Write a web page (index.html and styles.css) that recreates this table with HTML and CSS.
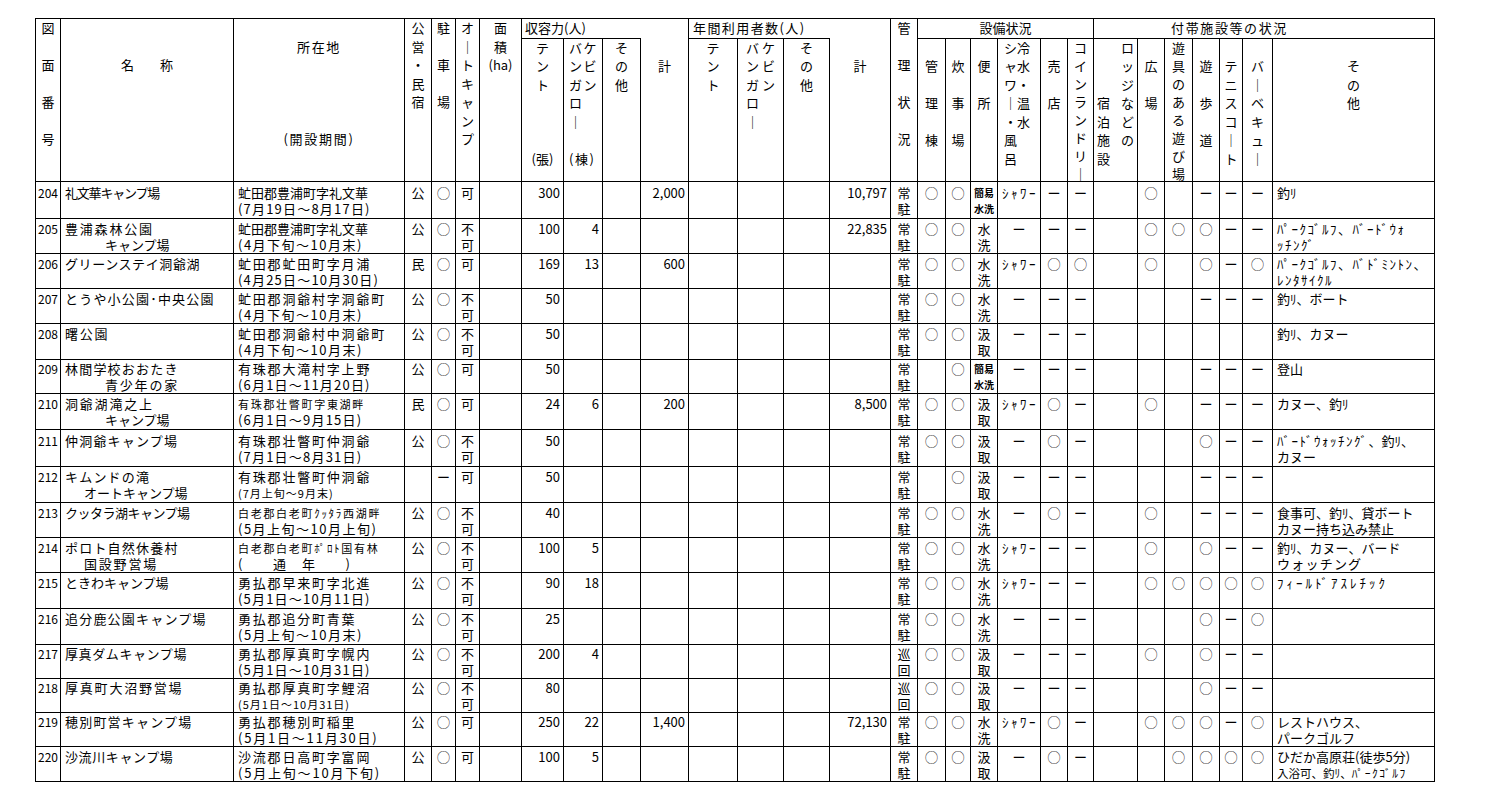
FILE: index.html
```html
<!DOCTYPE html>
<html lang="ja">
<head>
<meta charset="utf-8">
<title>キャンプ場一覧</title>
<link rel="stylesheet" href="styles.css">
</head>
<body>
<div class="page">
<table class="sheet">
<colgroup>
<col class="k1"><col class="k2"><col class="k3"><col class="k4"><col class="k5"><col class="k6"><col class="k7"><col class="k8"><col class="k9"><col class="k10"><col class="k11"><col class="k12"><col class="k13"><col class="k14"><col class="k15"><col class="k16"><col class="k17"><col class="k18"><col class="k19"><col class="k20"><col class="k21"><col class="k22"><col class="k23"><col class="k24"><col class="k25"><col class="k26"><col class="k27"><col class="k28"><col class="k29">
</colgroup>
<thead>
<tr class="hd1">
<th rowspan="2">図<br><br>面<br><br>番<br><br>号</th>
<th rowspan="2"><br><br>名　　称</th>
<th rowspan="2" class="hs"><br>所在地<br><br><br><br><br>(開設期間)</th>
<th rowspan="2">公<br>営<br>・<br>民<br>宿</th>
<th rowspan="2">駐<br><br>車<br><br>場</th>
<th rowspan="2">オ<br>｜<br>ト<br>キ<br>ャ<br>ン<br>プ</th>
<th rowspan="2">面<br>積<br>(ha)</th>
<th colspan="4" class="grp">収容力(人)</th>
<th colspan="4" class="grp g2">年間利用者数(人)</th>
<th rowspan="2">管<br><br>理<br><br>状<br><br>況</th>
<th colspan="6">設備状況</th>
<th colspan="7" class="g3">付帯施設等の状況</th>
</tr>
<tr class="hd2">
<th>テ<br>ン<br>ト<br><br><br><br>(張)</th>
<th class="two">バケ<br>ンビ<br>ガン<br>ロ<br>｜<br><br>(棟)</th>
<th>そ<br>の<br>他</th>
<th class="nt"><br>計</th>
<th>テ<br>ン<br>ト</th>
<th class="two2">バケ<br>ンビ<br>ガン<br>ロ<br>｜</th>
<th>そ<br>の<br>他</th>
<th class="nt"><br>計</th>
<th><br>管<br><br>理<br><br>棟</th>
<th><br>炊<br><br>事<br><br>場</th>
<th><br>便<br><br>所</th>
<th class="two3">シ冷<br>ャ水<br>ワ・<br>｜温<br>・水<br>風<br>呂</th>
<th><br>売<br><br>店</th>
<th><div class="fit">コ<br>イ<br>ン<br>ラ<br>ン<br>ド<br>リ<br>｜</div></th>
<th class="two4">　ロ<br>　ッ<br>　ジ<br>宿な<br>泊ど<br>施の<br>設</th>
<th><br>広<br><br>場</th>
<th><div class="fit">遊<br>具<br>の<br>あ<br>る<br>遊<br>び<br>場</div></th>
<th><br>遊<br><br>歩<br><br>道</th>
<th><br>テ<br>ニ<br>ス<br>コ<br>｜<br>ト</th>
<th><br>バ<br>｜<br>ベ<br>キ<br>ュ<br>｜</th>
<th><br>そ<br>の<br>他</th>
</tr>
</thead>
<tbody>
<tr class="h37"><td>204</td><td><span class="tm1">礼文華キャンプ場</span></td><td>虻田郡豊浦町字礼文華<br><span class="t1">(7月19日～8月17日)</span></td><td>公</td><td>◯</td><td>可</td><td></td><td>300</td><td></td><td></td><td>2,000</td><td></td><td></td><td></td><td>10,797</td><td>常<br>駐</td><td>◯</td><td>◯</td><td class="sm">簡易<br>水洗</td><td class="sw">ｼｬﾜｰ</td><td>ー</td><td>ー</td><td></td><td>◯</td><td></td><td>ー</td><td>ー</td><td>ー</td><td>釣ﾘ</td></tr>
<tr class="h35"><td>205</td><td><span class="t2">豊浦森林公園</span><br><span class="i1">キャンプ場</span></td><td>虻田郡豊浦町字礼文華<br><span class="t15">(4月下旬～10月末)</span></td><td>公</td><td>◯</td><td>不<br>可</td><td></td><td>100</td><td>4</td><td></td><td></td><td></td><td></td><td></td><td>22,835</td><td>常<br>駐</td><td>◯</td><td>◯</td><td>水<br>洗</td><td>ー</td><td>ー</td><td>ー</td><td></td><td>◯</td><td>◯</td><td>◯</td><td>ー</td><td>ー</td><td><span class="hw">ﾊﾟｰｸｺﾞﾙﾌ、ﾊﾞｰﾄﾞｳｫ</span><br><span class="hw">ｯﾁﾝｸﾞ</span></td></tr>
<tr class="h35"><td>206</td><td><span class="t05">グリーンステイ洞爺湖</span></td><td><span class="t2">虻田郡虻田町字月浦</span><br><span class="t1">(4月25日～10月30日)</span></td><td>民</td><td>◯</td><td>可</td><td></td><td>169</td><td>13</td><td></td><td>600</td><td></td><td></td><td></td><td></td><td>常<br>駐</td><td>◯</td><td>◯</td><td>水<br>洗</td><td class="sw">ｼｬﾜｰ</td><td>◯</td><td>◯</td><td></td><td>◯</td><td></td><td>◯</td><td>ー</td><td>◯</td><td><span class="hw">ﾊﾟｰｸｺﾞﾙﾌ、ﾊﾞﾄﾞﾐﾝﾄﾝ、</span><br><span class="hw">ﾚﾝﾀｻｲｸﾙ</span></td></tr>
<tr class="h35"><td>207</td><td><span class="t1">とうや小公園･中央公園</span></td><td><span class="t2">虻田郡洞爺村字洞爺町</span><br><span class="t15">(4月下旬～10月末)</span></td><td>公</td><td>◯</td><td>不<br>可</td><td></td><td>50</td><td></td><td></td><td></td><td></td><td></td><td></td><td></td><td>常<br>駐</td><td>◯</td><td>◯</td><td>水<br>洗</td><td>ー</td><td>ー</td><td>ー</td><td></td><td></td><td></td><td>ー</td><td>ー</td><td>ー</td><td>釣ﾘ、ボート</td></tr>
<tr class="h36"><td>208</td><td><span class="t2">曙公園</span></td><td><span class="t2">虻田郡洞爺村中洞爺町</span><br><span class="t15">(4月下旬～10月末)</span></td><td>公</td><td>◯</td><td>不<br>可</td><td></td><td>50</td><td></td><td></td><td></td><td></td><td></td><td></td><td></td><td>常<br>駐</td><td>◯</td><td>◯</td><td>汲<br>取</td><td>ー</td><td>ー</td><td>ー</td><td></td><td></td><td></td><td></td><td></td><td></td><td>釣ﾘ、カヌー</td></tr>
<tr class="h34"><td>209</td><td><span class="t1">林間学校おおたき</span><br><span class="i1 t2">青少年の家</span></td><td><span class="t2">有珠郡大滝村字上野</span><br><span class="t1">(6月1日～11月20日)</span></td><td>公</td><td>◯</td><td>可</td><td></td><td>50</td><td></td><td></td><td></td><td></td><td></td><td></td><td></td><td>常<br>駐</td><td></td><td>◯</td><td class="sm">簡易<br>水洗</td><td>ー</td><td>ー</td><td>ー</td><td></td><td></td><td></td><td>ー</td><td>ー</td><td>ー</td><td>登山</td></tr>
<tr class="h36"><td>210</td><td><span class="t2">洞爺湖滝之上</span><br><span class="i1">キャンプ場</span></td><td><span class="as">有珠郡壮瞥町字東湖畔</span><br><span class="t1">(6月1日～9月15日)</span></td><td>民</td><td>◯</td><td>可</td><td></td><td>24</td><td>6</td><td></td><td>200</td><td></td><td></td><td></td><td>8,500</td><td>常<br>駐</td><td>◯</td><td>◯</td><td>汲<br>取</td><td class="sw">ｼｬﾜｰ</td><td>◯</td><td>ー</td><td></td><td>◯</td><td></td><td>ー</td><td>ー</td><td>ー</td><td>カヌー、釣ﾘ</td></tr>
<tr class="h37"><td>211</td><td><span class="t1">仲洞爺キャンプ場</span></td><td><span class="t2">有珠郡壮瞥町仲洞爺</span><br><span class="t1">(7月1日～8月31日)</span></td><td>公</td><td>◯</td><td>不<br>可</td><td></td><td>50</td><td></td><td></td><td></td><td></td><td></td><td></td><td></td><td>常<br>駐</td><td>◯</td><td>◯</td><td>汲<br>取</td><td>ー</td><td>◯</td><td>ー</td><td></td><td></td><td></td><td>◯</td><td>ー</td><td>ー</td><td><span class="hw">ﾊﾞｰﾄﾞｳｫｯﾁﾝｸﾞ</span>、釣ﾘ、<br>カヌー</td></tr>
<tr class="h36"><td>212</td><td><span class="t1">キムンドの滝</span><br><span class="i2">オートキャンプ場</span></td><td><span class="t2">有珠郡壮瞥町仲洞爺</span><br><span class="as1">(7月上旬～9月末)</span></td><td></td><td>ー</td><td>可</td><td></td><td>50</td><td></td><td></td><td></td><td></td><td></td><td></td><td></td><td>常<br>駐</td><td></td><td>◯</td><td>汲<br>取</td><td>ー</td><td>ー</td><td>ー</td><td></td><td></td><td></td><td>ー</td><td>ー</td><td>ー</td><td></td></tr>
<tr class="h35"><td>213</td><td><span class="tm05">クッタラ湖キャンプ場</span></td><td><span class="as">白老郡白老町ｸｯﾀﾗ西湖畔</span><br><span class="t15">(5月上旬～10月上旬)</span></td><td>公</td><td>◯</td><td>不<br>可</td><td></td><td>40</td><td></td><td></td><td></td><td></td><td></td><td></td><td></td><td>常<br>駐</td><td>◯</td><td>◯</td><td>水<br>洗</td><td>ー</td><td>◯</td><td>ー</td><td></td><td>◯</td><td></td><td>ー</td><td>ー</td><td>ー</td><td>食事可、釣ﾘ、貸ボート<br>カヌー持ち込み禁止</td></tr>
<tr class="h35"><td>214</td><td><span class="t1">ポロト自然休養村</span><br><span class="i2 t2">国設野営場</span></td><td><span class="as">白老郡白老町ﾎﾟﾛﾄ国有林</span><br><span class="t15">(　　通　年　　)</span></td><td>公</td><td>◯</td><td>不<br>可</td><td></td><td>100</td><td>5</td><td></td><td></td><td></td><td></td><td></td><td></td><td>常<br>駐</td><td>◯</td><td>◯</td><td>水<br>洗</td><td class="sw">ｼｬﾜｰ</td><td>ー</td><td>ー</td><td></td><td>◯</td><td></td><td>◯</td><td>ー</td><td>ー</td><td>釣ﾘ、カヌー、バード<br><span class="t1">ウォッチング</span></td></tr>
<tr class="h36"><td>215</td><td>ときわキャンプ場</td><td><span class="t2">勇払郡早来町字北進</span><br><span class="t1">(5月1日～10月11日)</span></td><td>公</td><td>◯</td><td>不<br>可</td><td></td><td>90</td><td>18</td><td></td><td></td><td></td><td></td><td></td><td></td><td>常<br>駐</td><td>◯</td><td>◯</td><td>水<br>洗</td><td class="sw">ｼｬﾜｰ</td><td>ー</td><td>ー</td><td></td><td>◯</td><td>◯</td><td>◯</td><td>◯</td><td>◯</td><td><span class="hw3">ﾌｨｰﾙﾄﾞｱｽﾚﾁｯｸ</span></td></tr>
<tr class="h36"><td>216</td><td><span class="t1">追分鹿公園キャンプ場</span></td><td><span class="t2">勇払郡追分町青葉</span><br><span class="t15">(5月上旬～10月末)</span></td><td>公</td><td>◯</td><td>不<br>可</td><td></td><td>25</td><td></td><td></td><td></td><td></td><td></td><td></td><td></td><td>常<br>駐</td><td>◯</td><td>◯</td><td>水<br>洗</td><td>ー</td><td>ー</td><td>ー</td><td></td><td></td><td></td><td>◯</td><td>ー</td><td>◯</td><td></td></tr>
<tr class="h34"><td>217</td><td><span class="t05">厚真ダムキャンプ場</span></td><td><span class="t2">勇払郡厚真町字幌内</span><br><span class="t1">(5月1日～10月31日)</span></td><td>公</td><td>◯</td><td>不<br>可</td><td></td><td>200</td><td>4</td><td></td><td></td><td></td><td></td><td></td><td></td><td>巡<br>回</td><td>◯</td><td>◯</td><td>汲<br>取</td><td>ー</td><td>ー</td><td>ー</td><td></td><td>◯</td><td></td><td>◯</td><td>ー</td><td>ー</td><td></td></tr>
<tr class="h34"><td>218</td><td><span class="t2">厚真町大沼野営場</span></td><td><span class="t2">勇払郡厚真町字鯉沼</span><br><span class="as1">(5月1日～10月31日)</span></td><td>公</td><td>◯</td><td>不<br>可</td><td></td><td>80</td><td></td><td></td><td></td><td></td><td></td><td></td><td></td><td>巡<br>回</td><td>◯</td><td>◯</td><td>汲<br>取</td><td>ー</td><td>ー</td><td>ー</td><td></td><td></td><td></td><td>◯</td><td>ー</td><td>ー</td><td></td></tr>
<tr class="h34"><td>219</td><td><span class="t1">穂別町営キャンプ場</span></td><td><span class="t2">勇払郡穂別町稲里</span><br><span class="t2">(5月1日～11月30日)</span></td><td>公</td><td>◯</td><td>可</td><td></td><td>250</td><td>22</td><td></td><td>1,400</td><td></td><td></td><td></td><td>72,130</td><td>常<br>駐</td><td>◯</td><td>◯</td><td>水<br>洗</td><td class="sw">ｼｬﾜｰ</td><td>◯</td><td>ー</td><td></td><td>◯</td><td>◯</td><td>◯</td><td>ー</td><td>◯</td><td>レストハウス、<br>パークゴルフ</td></tr>
<tr class="h35"><td>220</td><td><span class="t05">沙流川キャンプ場</span></td><td><span class="t2">沙流郡日高町字富岡</span><br><span class="t2">(5月上旬～10月下旬)</span></td><td>公</td><td>◯</td><td>可</td><td></td><td>100</td><td>5</td><td></td><td></td><td></td><td></td><td></td><td></td><td>常<br>駐</td><td>◯</td><td>◯</td><td>汲<br>取</td><td>ー</td><td>◯</td><td>ー</td><td></td><td></td><td>◯</td><td>◯</td><td>◯</td><td>◯</td><td>ひだか高原荘(徒歩5分)<br><span class="xs">入浴可、釣ﾘ、<span class="hw">ﾊﾟｰｸｺﾞﾙﾌ</span></span></td></tr>
</tbody>
</table>
</div>
</body>
</html>
```

FILE: styles.css
```css
* { box-sizing: border-box; }
html, body { margin: 0; padding: 0; background: #fff; }
body {
  font-family: "Noto Sans CJK JP", "Noto Sans", sans-serif;
  font-size: 13px;
  color: #000;
}
.page { padding: 18px 0 0 35px; }

.sheet {
  border-collapse: collapse;
  table-layout: fixed;
  width: 1400px;
}
.sheet th, .sheet td {
  border: 1px solid #000;
  padding: 0;
  font-weight: normal;
  vertical-align: top;
  white-space: nowrap;
}

/* column widths */
.k1 { width: 25px; } .k2 { width: 173px; } .k3 { width: 171px; }
.k4 { width: 27px; } .k5 { width: 24px; } .k6 { width: 24px; }
.k7 { width: 42px; } .k8 { width: 42px; } .k9 { width: 39px; }
.k10 { width: 38px; } .k11 { width: 48px; } .k12 { width: 49px; }
.k13 { width: 46px; } .k14 { width: 46px; } .k15 { width: 61px; }
.k16 { width: 27px; } .k17 { width: 28px; } .k18 { width: 25px; }
.k19 { width: 27px; } .k20 { width: 43px; } .k21 { width: 27px; }
.k22 { width: 26px; } .k23 { width: 44px; } .k24 { width: 27px; }
.k25 { width: 28px; } .k26 { width: 27px; } .k27 { width: 23px; }
.k28 { width: 30px; } .k29 { width: 162px; }

/* header */
.hd1 { height: 19px; }
.hd2 { height: 143px; }
.sheet th { line-height: 18.5px; text-align: center; }
.sheet th.hs { letter-spacing: 1.7px; }
.sheet th.grp { text-align: left; padding-left: 3px; border-bottom: none; }
.sheet th.g2 { padding-left: 4px; letter-spacing: 1.4px; }
.sheet th.g3 { text-align: left; padding-left: 77px; letter-spacing: 1.6px; }
.sheet th.nt { border-top: none; }
.sheet th.two { text-align: left; padding-left: 5px; letter-spacing: 1.5px; }
.sheet th.two2 { text-align: left; padding-left: 8px; letter-spacing: 3px; }
.sheet th.two3 { text-align: left; padding-left: 6px; }
.sheet th.two4 { text-align: left; padding-left: 3px; letter-spacing: 11px; }
.fit { height: 140px; line-height: 18px; }

/* body */
.sheet tbody td {
  line-height: 16px;
  padding: 2px 0 0;
  text-align: center;
  overflow: hidden;
}
.sheet .h34 { height: 34px; }
.sheet .h35 { height: 35px; }
.sheet .h36 { height: 36px; }
.sheet .h37 { height: 37px; }
.sheet .h34 td { padding-top: 1px; }
.sheet .h37 td { padding-top: 3px; }

.sheet tbody td:nth-child(1) { text-align: left; padding-left: 2px; font-size: 12px; }
.sheet tbody td:nth-child(2),
.sheet tbody td:nth-child(3) { text-align: left; padding-left: 4px; }
.sheet tbody td:nth-child(n+7):nth-child(-n+15) { text-align: right; padding-right: 3px; }
.sheet tbody td:nth-child(29) { text-align: left; padding-left: 4px; }

.sheet tbody td.sm { font-size: 10px; font-weight: bold; }
.sheet tbody td.sw { letter-spacing: 2.5px; text-indent: 2px; }

/* spacing helpers */
.tm1 { letter-spacing: -1.2px; }
.tm05 { letter-spacing: -0.5px; }
.t05 { letter-spacing: 0.6px; }
.t1 { letter-spacing: 1.2px; }
.t15 { letter-spacing: 1.5px; }
.t2 { letter-spacing: 1.8px; }
.hw { letter-spacing: 1.5px; }
.hw3 { letter-spacing: 3px; }
.as { font-size: 11px; letter-spacing: 1.7px; }
.as1 { font-size: 11px; letter-spacing: 1px; }
.xs { font-size: 11.5px; }
.i1 { padding-left: 40px; }
.i2 { padding-left: 19px; }
```
